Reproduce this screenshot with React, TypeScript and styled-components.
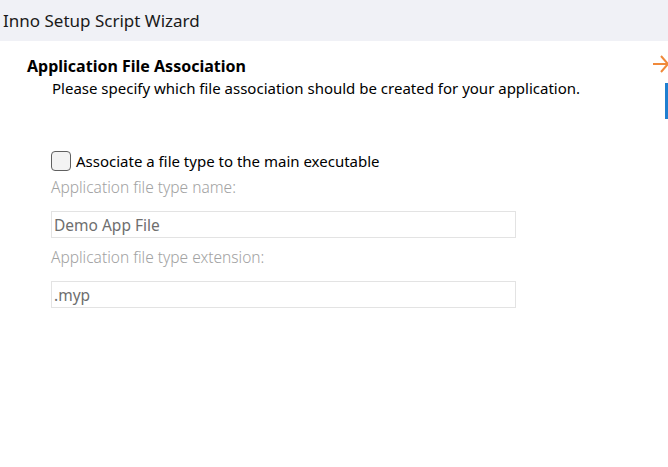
import styled, { createGlobalStyle } from "styled-components";

const GlobalStyle = createGlobalStyle`
  html, body {
    margin: 0;
    padding: 0;
    background: #ffffff;
    overflow: hidden;
  }
  body {
    font-family: "Noto Sans", "Segoe UI", sans-serif;
    color: #000000;
  }
`;

const Window = styled.div`
  position: relative;
  width: 668px;
  height: 467px;
  background: #ffffff;
  overflow: hidden;
`;

const TitleBar = styled.div`
  height: 41px;
  background: #f0f1f6;
  display: flex;
  align-items: center;
  padding-left: 3px;
  font-size: 17px;
  color: #1a1a1a;
`;

const Header = styled.div`
  display: flex;
  flex-direction: column;
  padding: 14px 0 0 27px;
`;

const HeaderTitle = styled.div`
  font-size: 16px;
  font-weight: 700;
  line-height: 22px;
`;

const HeaderText = styled.div`
  font-size: 15px;
  line-height: 22px;
  padding-left: 25px;
`;

const Body = styled.div`
  display: flex;
  flex-direction: column;
  padding: 52px 0 0 51px;
`;

const CheckRow = styled.label`
  display: flex;
  align-items: center;
  gap: 5px;
  font-size: 15px;
  height: 20px;
`;

const CheckBox = styled.span`
  width: 18px;
  height: 18px;
  border: 1px solid #606060;
  border-radius: 4px;
  background: #f3f3f3;
`;

const FieldLabel = styled.div<{ $top: number }>`
  margin-top: ${(p) => p.$top}px;
  font-size: 15.5px;
  font-weight: 300;
  color: #a2a2a2;
  line-height: 22px;
`;

const Field = styled.div`
  margin-top: 13px;
  width: 461px;
  height: 25px;
  border: 1px solid #e3e3e3;
  display: flex;
  align-items: center;
  padding-left: 2px;
  font-size: 15.5px;
  color: #6e6e6e;
`;

const SideArrow = styled.svg`
  position: absolute;
  top: 54px;
  right: 0;
`;

const SideBar = styled.div`
  position: absolute;
  top: 83px;
  right: 0;
  width: 3px;
  height: 36px;
  background: #1f7fd0;
`;

export default function App() {
  return (
    <Window>
      <GlobalStyle />
      <TitleBar>Inno Setup Script Wizard</TitleBar>
      <Header>
        <HeaderTitle>Application File Association</HeaderTitle>
        <HeaderText>
          Please specify which file association should be created for your application.
        </HeaderText>
      </Header>
      <Body>
        <CheckRow>
          <CheckBox />
          Associate a file type to the main executable
        </CheckRow>
        <FieldLabel $top={5}>Application file type name:</FieldLabel>
        <Field>Demo App File</Field>
        <FieldLabel $top={8}>Application file type extension:</FieldLabel>
        <Field>.myp</Field>
      </Body>
      <SideArrow width="15" height="20" viewBox="0 0 15 20">
        <path d="M0 10 H15 M8 2 L15 10 L8 18" stroke="#f0893a" strokeWidth="2" fill="none" />
      </SideArrow>
      <SideBar />
    </Window>
  );
}
